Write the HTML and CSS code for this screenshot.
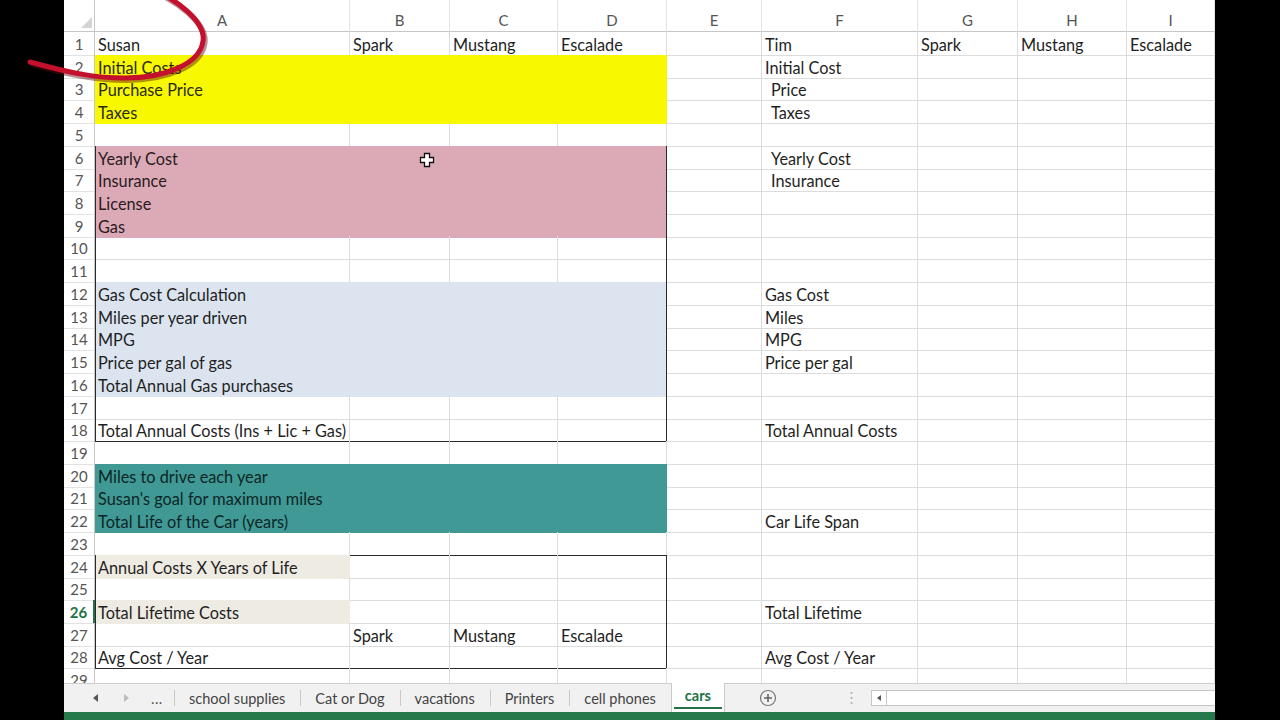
FILE: index.html
```html
<!DOCTYPE html>
<html>
<head>
<meta charset="utf-8">
<link rel="stylesheet" href="styles.css">
</head>
<body>
<div class="app">
  <div class="sheet">
    <div class="r hd"><div class="n corner"><svg width="30" height="31" viewBox="0 0 30 31"><polygon points="28,17 28,28 17,28" fill="#d4d4d4"/></svg></div><div>A</div><div>B</div><div>C</div><div>D</div><div>E</div><div>F</div><div>G</div><div>H</div><div>I</div></div>
    <div class="r"><div class="n">1</div><div>Susan</div><div>Spark</div><div>Mustang</div><div>Escalade</div><div></div><div>Tim</div><div>Spark</div><div>Mustang</div><div>Escalade</div></div>
    <div class="r"><div class="n">2</div><div class="y">Initial Costs</div><div class="y"></div><div class="y"></div><div class="y"></div><div></div><div>Initial Cost</div><div></div><div></div><div></div></div>
    <div class="r"><div class="n">3</div><div class="y">Purchase Price</div><div class="y"></div><div class="y"></div><div class="y"></div><div></div><div class="ind">Price</div><div></div><div></div><div></div></div>
    <div class="r"><div class="n">4</div><div class="y">Taxes</div><div class="y"></div><div class="y"></div><div class="y"></div><div></div><div class="ind">Taxes</div><div></div><div></div><div></div></div>
    <div class="r"><div class="n">5</div><div class="bb"></div><div class="bb"></div><div class="bb"></div><div class="bb"></div><div></div><div></div><div></div><div></div><div></div></div>
    <div class="r"><div class="n">6</div><div class="p bl">Yearly Cost</div><div class="p"></div><div class="p"></div><div class="p br"></div><div></div><div class="ind">Yearly Cost</div><div></div><div></div><div></div></div>
    <div class="r"><div class="n">7</div><div class="p bl">Insurance</div><div class="p"></div><div class="p"></div><div class="p br"></div><div></div><div class="ind">Insurance</div><div></div><div></div><div></div></div>
    <div class="r"><div class="n">8</div><div class="p bl">License</div><div class="p"></div><div class="p"></div><div class="p br"></div><div></div><div></div><div></div><div></div><div></div></div>
    <div class="r"><div class="n">9</div><div class="p bl">Gas</div><div class="p"></div><div class="p"></div><div class="p br"></div><div></div><div></div><div></div><div></div><div></div></div>
    <div class="r"><div class="n">10</div><div class="bl"></div><div></div><div></div><div class="br"></div><div></div><div></div><div></div><div></div><div></div></div>
    <div class="r"><div class="n">11</div><div class="bl"></div><div></div><div></div><div class="br"></div><div></div><div></div><div></div><div></div><div></div></div>
    <div class="r"><div class="n">12</div><div class="b bl">Gas Cost Calculation</div><div class="b"></div><div class="b"></div><div class="b br"></div><div></div><div>Gas Cost</div><div></div><div></div><div></div></div>
    <div class="r"><div class="n">13</div><div class="b bl">Miles per year driven</div><div class="b"></div><div class="b"></div><div class="b br"></div><div></div><div>Miles</div><div></div><div></div><div></div></div>
    <div class="r"><div class="n">14</div><div class="b bl">MPG</div><div class="b"></div><div class="b"></div><div class="b br"></div><div></div><div>MPG</div><div></div><div></div><div></div></div>
    <div class="r"><div class="n">15</div><div class="b bl">Price per gal of gas</div><div class="b"></div><div class="b"></div><div class="b br"></div><div></div><div>Price per gal</div><div></div><div></div><div></div></div>
    <div class="r"><div class="n">16</div><div class="b bl">Total Annual Gas purchases</div><div class="b"></div><div class="b"></div><div class="b br"></div><div></div><div></div><div></div><div></div><div></div></div>
    <div class="r"><div class="n">17</div><div class="bl"></div><div></div><div></div><div class="br"></div><div></div><div></div><div></div><div></div><div></div></div>
    <div class="r"><div class="n">18</div><div class="bl bb">Total Annual Costs (Ins + Lic + Gas)</div><div class="bb"></div><div class="bb"></div><div class="br bb"></div><div></div><div>Total Annual Costs</div><div></div><div></div><div></div></div>
    <div class="r"><div class="n">19</div><div></div><div></div><div></div><div></div><div></div><div></div><div></div><div></div><div></div></div>
    <div class="r"><div class="n">20</div><div class="t">Miles to drive each year</div><div class="t"></div><div class="t"></div><div class="t"></div><div></div><div></div><div></div><div></div><div></div></div>
    <div class="r"><div class="n">21</div><div class="t">Susan's goal for maximum miles</div><div class="t"></div><div class="t"></div><div class="t"></div><div></div><div></div><div></div><div></div><div></div></div>
    <div class="r"><div class="n">22</div><div class="t">Total Life of the Car (years)</div><div class="t"></div><div class="t"></div><div class="t"></div><div></div><div>Car Life Span</div><div></div><div></div><div></div></div>
    <div class="r"><div class="n">23</div><div class="bb"></div><div class="bb"></div><div class="bb"></div><div class="bb"></div><div></div><div></div><div></div><div></div><div></div></div>
    <div class="r"><div class="n">24</div><div class="g bl">Annual Costs X Years of Life</div><div></div><div></div><div class="br"></div><div></div><div></div><div></div><div></div><div></div></div>
    <div class="r"><div class="n">25</div><div class="bl"></div><div></div><div></div><div class="br"></div><div></div><div></div><div></div><div></div><div></div></div>
    <div class="r"><div class="n sel">26</div><div class="g bl">Total Lifetime Costs</div><div></div><div></div><div class="br"></div><div></div><div>Total Lifetime</div><div></div><div></div><div></div></div>
    <div class="r"><div class="n">27</div><div class="bl"></div><div>Spark</div><div>Mustang</div><div class="br">Escalade</div><div></div><div></div><div></div><div></div><div></div></div>
    <div class="r"><div class="n">28</div><div class="bl bb">Avg Cost / Year</div><div class="bb"></div><div class="bb"></div><div class="br bb"></div><div></div><div>Avg Cost / Year</div><div></div><div></div><div></div></div>
    <div class="r"><div class="n">29</div><div></div><div></div><div></div><div></div><div></div><div></div><div></div><div></div><div></div></div>
  </div>
  <div class="tabs">
    <div class="nav">
      <svg class="arr1" width="6" height="8" viewBox="0 0 6 8"><polygon points="5,0 5,8 0,4" fill="#555"/></svg>
      <svg class="arr2" width="6" height="8" viewBox="0 0 6 8"><polygon points="1,0 1,8 6,4" fill="#bcbcbc"/></svg>
      <span class="more">...</span>
    </div>
    <div class="tab">school supplies</div>
    <div class="tab">Cat or Dog</div>
    <div class="tab">vacations</div>
    <div class="tab">Printers</div>
    <div class="tab">cell phones</div>
    <div class="tab on"><span>cars</span></div>
    <svg class="add" width="18" height="18" viewBox="0 0 18 18"><circle cx="9" cy="9" r="7.5" fill="none" stroke="#777" stroke-width="1.2"/><path d="M9 5v8M5 9h8" stroke="#666" stroke-width="1.6"/></svg>
    <svg class="split" width="3" height="14" viewBox="0 0 3 14"><circle cx="1.5" cy="2" r="1" fill="#aaa"/><circle cx="1.5" cy="7" r="1" fill="#aaa"/><circle cx="1.5" cy="12" r="1" fill="#aaa"/></svg>
    <div class="scroll"><div class="sbtn"><svg width="4" height="6" viewBox="0 0 4 6"><polygon points="4,0 4,6 0,3" fill="#555"/></svg></div></div>
  </div>
  <div class="status"></div>
</div>
<svg class="ring" width="240" height="100" viewBox="0 0 240 100">
  <path d="M148 -12 C176 -2, 206 22, 203 41 C200 64, 165 78, 125 78 C95 78, 70 73, 30 62" fill="none" stroke="#5a0a14" stroke-opacity="0.45" stroke-width="6" transform="translate(1.5 2)"/>
  <path d="M148 -12 C176 -2, 206 22, 203 41 C200 64, 165 78, 125 78 C95 78, 70 73, 30 62" fill="none" stroke="#c4102c" stroke-width="5" stroke-linecap="round"/>
</svg>
<svg class="cursor" width="16" height="16" viewBox="0 0 16 16">
  <polygon points="5.5,1.5 10.5,1.5 10.5,5.5 14.5,5.5 14.5,10.5 10.5,10.5 10.5,14.5 5.5,14.5 5.5,10.5 1.5,10.5 1.5,5.5 5.5,5.5" fill="#fff" stroke="#111" stroke-width="1.3"/>
</svg>
</body>
</html>
```
FILE: styles.css
```css
* { box-sizing: border-box; }
body {
  margin: 0;
  background: #000;
  position: relative;
  height: 720px;
  overflow: hidden;
  font-family: Lato, "Liberation Sans", sans-serif;
}
.app {
  margin-left: 64px;
  width: 1151px;
  height: 720px;
  background: #fff;
  display: flex;
  flex-direction: column;
  overflow: hidden;
}
.sheet {
  height: 683px;
  flex: none;
  overflow: hidden;
}
.r {
  display: grid;
  grid-template-columns: 31px 255px 100px 108px 109px 95px 156px 100px 109px 88px;
  height: 22.73px;
}
.r > div {
  border-right: 1px solid #dcdcdc;
  border-bottom: 1px solid #dcdcdc;
  padding: 2px 0 0 3px;
  font-size: 16.3px;
  line-height: 21px;
  color: #1f1f1f;
  white-space: nowrap;
  overflow: visible;
}
.r > .n {
  padding: 2px 0 0 0;
  text-align: center;
  color: #555;
  font-size: 15px;
  border-right-color: #c6c6c6;
  border-bottom-color: #e2e2e2;
}
.r > .sel {
  color: #217346;
  font-weight: bold;
  border-right: 2px solid #217346;
}
.hd { height: 32px; }
.r.hd > div {
  padding: 10px 0 0 0;
  text-align: center;
  color: #555;
  font-size: 15px;
  border-right-color: #e4e4e4;
  border-bottom-color: #c6c6c6;
}
.r.hd > .corner { padding: 0; border-right-color: #c6c6c6; }
.corner svg { display: block; }
.r > .ind { padding-left: 9px; }
.r > .y { background: #f8f800; border-color: #f8f800; color: #2a2a10; }
.r > .p { background: #dcaab7; border-color: #dcaab7; color: #2a1a1e; }
.r > .b { background: #dce5ef; border-color: #dce5ef; }
.r > .t { background: #409995; border-color: #409995; color: #0c2626; }
.r > .g { background: #eeebe3; border-color: #eeebe3; }
.r > .bl { box-shadow: inset 1px 0 0 #2a2a2a; }
.r > .br { border-right-color: #2a2a2a; }
.r > .bb { border-bottom-color: #2a2a2a; }

.tabs {
  height: 29px;
  flex: none;
  display: flex;
  align-items: center;
  background: #f1f1f1;
  border-top: 1px solid #cfcfcf;
  font-size: 14.5px;
  color: #444;
}
.nav {
  width: 110px;
  height: 100%;
  display: flex;
  align-items: center;
  padding-left: 29px;
}
.arr2 { margin-left: 24px; }
.more { margin-left: 22px; color: #555; letter-spacing: 0.5px; }
.tab {
  height: 100%;
  display: flex;
  align-items: center;
  padding: 0 15px;
  background: linear-gradient(#c9c9c9, #c9c9c9) left center / 1px 16px no-repeat;
}
.tab.on {
  background: #fff;
  border-left: 1px solid #c9c9c9;
  border-right: 1px solid #c9c9c9;
  margin-top: -1px;
  height: 29px;
  padding: 0 2px 3px;
  align-items: flex-end;
}
.tab.on span {
  display: block;
  padding: 0 11px;
  line-height: 22px;
  border-bottom: 2px solid #217346;
  color: #217346;
  font-weight: bold;
}
.add { margin-left: 34px; }
.split { margin-left: 73px; }
.scroll {
  margin-left: 18px;
  flex: 1;
  height: 16px;
  background: #fff;
  border: 1px solid #c6c6c6;
  border-right: 0;
  display: flex;
}
.sbtn {
  width: 15px;
  border-right: 1px solid #c6c6c6;
  display: flex;
  align-items: center;
  justify-content: center;
}
.status {
  flex: 1;
  background: #26794a;
}
.ring {
  position: absolute;
  left: 0;
  top: 0;
}
.cursor {
  position: absolute;
  left: 419px;
  top: 152px;
}
```
